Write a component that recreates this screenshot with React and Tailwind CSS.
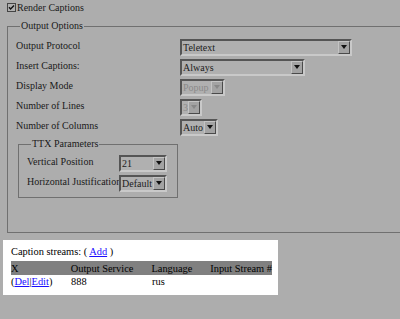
import React from 'react'

function Select({ value, width, disabled }) {
  return (
    <div
      className={`flex h-[17px] items-stretch border-2 border-t-[#555] border-l-[#555] border-b-[#c9c9c9] border-r-[#c9c9c9] bg-[#b0b0b0] ${width}`}
    >
      <span className={`flex-1 overflow-hidden whitespace-nowrap pl-[1px] leading-[14px] ${disabled ? 'text-[#8a8a8a]' : 'text-[#1c1c1c]'}`}>{value}</span>
      <span className="flex w-[12px] shrink-0 items-center justify-center border border-t-[#c4c4c4] border-l-[#c4c4c4] border-b-[#4a4a4a] border-r-[#4a4a4a] bg-[#a3a3a3]">
        <svg width="6" height="4" viewBox="0 0 6 4">
          <path d="M0 0h6L3 4z" fill={disabled ? '#888' : '#111'} />
        </svg>
      </span>
    </div>
  )
}

function Row({ label, children }) {
  return (
    <div className="flex h-[20px] items-center">
      <span className="w-[164px] -mt-[3px]">{label}</span>
      {children}
    </div>
  )
}

export default function App() {
  return (
    <div className="w-[400px] h-[319px] overflow-hidden bg-[#adadad] font-['Liberation_Serif','Times_New_Roman',serif] text-[10px] leading-[13px] text-[#1a1a1a]">
      <div className="flex items-center pl-[7px] pt-[1px] h-[14px]">
        <svg width="9" height="9" viewBox="0 0 9 9" className="mr-[1px]">
          <rect x="0.5" y="0.5" width="8" height="8" fill="#b0b0b0" stroke="#444" />
          <path d="M2 4.2l1.6 1.8L7 2.4" stroke="#111" strokeWidth="1.4" fill="none" />
        </svg>
        <span>Render Captions</span>
      </div>

      <fieldset className="mt-[6px] ml-[7px] w-[420px] h-[213px] border border-[#707070] pl-[8px]">
        <legend className="ml-[4px] px-[1px] leading-[12px]">Output Options</legend>
        <div className="pt-[5px] flex flex-col">
          <Row label="Output Protocol"><Select value="Teletext" width="w-[172px]" /></Row>
          <Row label="Insert Captions:"><Select value="Always" width="w-[125px]" /></Row>
          <Row label="Display Mode"><Select value="Popup" width="w-[45px]" disabled /></Row>
          <Row label="Number of Lines"><Select value="3" width="w-[22px]" disabled /></Row>
          <Row label="Number of Columns"><Select value="Auto" width="w-[38px]" /></Row>
        </div>

        <fieldset className="mt-[1px] ml-[2px] w-[160px] h-[60px] border border-[#707070] pl-[8px]">
          <legend className="ml-[4px] px-[1px] leading-[12px]">TTX Parameters</legend>
          <div className="flex flex-col pt-[3px]">
            <div className="flex h-[20px] items-center">
              <span className="w-[92px] -mt-[3px]">Vertical Position</span>
              <Select value="21" width="w-[48px]" />
            </div>
            <div className="flex h-[20px] items-center">
              <span className="w-[92px] -mt-[3px] whitespace-nowrap">Horizontal Justification</span>
              <Select value="Default" width="w-[48px]" />
            </div>
          </div>
        </fieldset>
      </fieldset>

      <div className="mt-[7px] ml-[3px] w-[275px] h-[55px] bg-white pl-[8px] pt-[5px] text-[10.4px] text-black">
        <div className="h-[16px]">
          Caption streams: ( <a className="text-[#1a0dff] underline">Add</a> )
        </div>
        <div className="mr-[6px] flex h-[14px] items-center whitespace-nowrap bg-[#808080]">
          <span className="w-[60px]">X</span>
          <span className="w-[81px]">Output Service</span>
          <span className="w-[59px]">Language</span>
          <span>Input Stream #</span>
        </div>
        <div className="flex h-[13px] items-center">
          <span className="w-[60px]">
            (<a className="text-[#1a0dff] underline">Del</a>|<a className="text-[#1a0dff] underline">Edit</a>)
          </span>
          <span className="w-[81px]">888</span>
          <span className="w-[59px]">rus</span>
        </div>
      </div>
    </div>
  )
}
